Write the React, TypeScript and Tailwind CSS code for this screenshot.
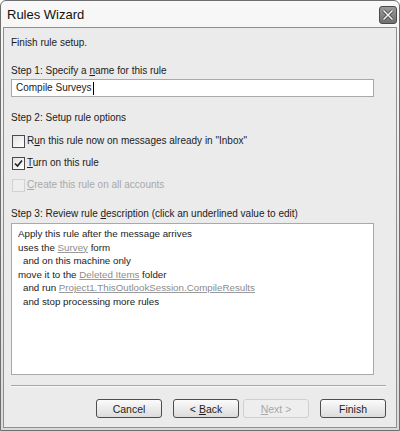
import React from 'react';

const font = { fontFamily: '"Liberation Sans", Arial, sans-serif' };

const Checkbox = ({ checked, disabled }: { checked?: boolean; disabled?: boolean }) => (
  <span
    className={`flex h-[13px] w-[13px] shrink-0 items-center justify-center border ${
      disabled ? 'border-[#d2d2d2] bg-[#eeeeee]' : 'border-[#4a4a4a] bg-gradient-to-br from-[#e2e2e2] to-white'
    }`}
  >
    {checked && (
      <svg width="9" height="9" viewBox="0 0 9 9">
        <path d="M1 4.5 L3.5 7 L8 1.5" fill="none" stroke="#222" strokeWidth="1.6" />
      </svg>
    )}
  </span>
);

const Link = ({ children }: { children: React.ReactNode }) => (
  <span className="text-[#8c8c8c] underline decoration-[#9a9a9a]">{children}</span>
);

const Button = ({ children, disabled }: { children: React.ReactNode; disabled?: boolean }) => (
  <div
    className={`flex h-[19px] w-[66px] items-center justify-center rounded-[3px] border text-[10.5px] ${
      disabled
        ? 'border-[#d0d0d0] bg-[#eeeeee] text-[#a8a8a8]'
        : 'border-[#4d4d4d] bg-gradient-to-b from-[#fbfbfb] to-[#dcdcdc] text-[#1e1e1e]'
    }`}
  >
    {children}
  </div>
);

export default function App() {
  return (
    <div className="h-[431px] w-[400px] bg-white" style={font}>
      <div className="flex h-[431px] w-[400px] flex-col rounded-t-[6px] border border-[#6e6e6e] bg-gradient-to-b from-[#f8f8f8] to-[#d9d9d9]">
        {/* title bar */}
        <div className="flex h-[26px] shrink-0 items-center justify-between pl-[6px] pr-[2px]">
          <span className="text-[13px] leading-none text-[#111]">Rules Wizard</span>
          <div className="mt-[2px] flex h-[18px] w-[18px] items-center justify-center rounded-[3px] border border-[#4a4a4a] bg-gradient-to-b from-[#9a9a9a] to-[#707070]">
            <svg width="12" height="12" viewBox="0 0 12 12">
              <path d="M1.5 1.5 L10.5 10.5 M10.5 1.5 L1.5 10.5" stroke="#3a3a3a" strokeWidth="3" />
              <path d="M1.5 1.5 L10.5 10.5 M10.5 1.5 L1.5 10.5" stroke="#f4f4f4" strokeWidth="1.6" />
            </svg>
          </div>
        </div>
        {/* client area */}
        <div className="mx-[2px] mb-[2px] flex flex-1 flex-col border border-[#8e8e8e] bg-[#ebebeb] pl-[7px] text-[10px] leading-[14px] text-[#1c1c1c]">
          <div className="mt-[8px]">Finish rule setup.</div>

          <div className="mt-[14px]">
            Step 1: Specify a <span className="underline">n</span>ame for this rule
          </div>
          <div className="mt-[1px] flex h-[18px] w-[363px] items-center border border-[#a9a9a9] bg-white pl-[4px]">
            Compile Surveys<span className="ml-[1px] inline-block h-[13px] w-px bg-black" />
          </div>

          <div className="mt-[14px]">Step 2: Setup rule options</div>
          <div className="mt-[9px] flex items-center gap-[2px] pl-[1px]">
            <Checkbox />
            <span>
              R<span className="underline">u</span>n this rule now on messages already in "Inbox"
            </span>
          </div>
          <div className="mt-[8px] flex items-center gap-[2px] pl-[1px]">
            <Checkbox checked />
            <span>
              <span className="underline">T</span>urn on this rule
            </span>
          </div>
          <div className="mt-[8px] flex items-center gap-[2px] pl-[1px] text-[#a9a9a9]">
            <Checkbox disabled />
            <span>
              <span className="underline">C</span>reate this rule on all accounts
            </span>
          </div>

          <div className="mt-[15px]">
            Step 3: Review rule <span className="underline">d</span>escription (click an underlined value to edit)
          </div>
          <div className="mt-[2px] h-[152px] w-[363px] border border-[#a9a9a9] bg-white pl-[6px] pt-[3px] text-[9.75px] leading-[13.5px]">
            <div>Apply this rule after the message arrives</div>
            <div>
              uses the <Link>Survey</Link> form
            </div>
            <div className="pl-[5px]">and on this machine only</div>
            <div>
              move it to the <Link>Deleted Items</Link> folder
            </div>
            <div className="pl-[5px]">
              and run <Link>Project1.ThisOutlookSession.CompileResults</Link>
            </div>
            <div className="pl-[5px]">and stop processing more rules</div>
          </div>

          <div className="mt-[10px] h-[2px] w-[375px] border-t border-b border-t-[#a6a6a6] border-b-[#fafafa]" />

          <div className="mt-[12px] flex w-[375px] justify-end">
            <Button>Cancel</Button>
            <div className="ml-[11px]">
              <Button>
                &lt; <span className="ml-[3px] underline">B</span>ack
              </Button>
            </div>
            <div className="ml-[4px]">
              <Button disabled>
                <span className="underline">N</span>ext &gt;
              </Button>
            </div>
            <div className="ml-[11px]">
              <Button>Finish</Button>
            </div>
          </div>
        </div>
      </div>
    </div>
  );
}
